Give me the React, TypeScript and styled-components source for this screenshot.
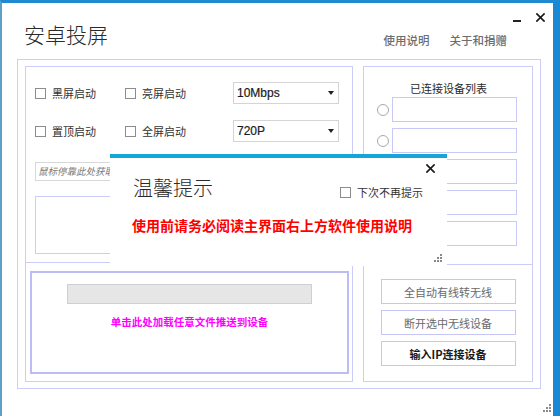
import React from 'react';
import styled, { createGlobalStyle } from 'styled-components';

const GlobalStyle = createGlobalStyle`
  html, body {
    margin: 0;
    padding: 0;
    background: #ffffff;
  }
  body {
    font-family: "Noto Sans CJK SC", "Liberation Sans", sans-serif;
    color: #333;
  }
  * {
    box-sizing: border-box;
  }
`;

const lavender = '#cdcdfc';

const Window = styled.div`
  position: relative;
  width: 560px;
  height: 416px;
  background: #fff;
  border-top: 3px solid #1f8ad2;
  border-left: 2px solid #5d9fc8;
  border-right: 7px solid #1a88d2;
  overflow: hidden;
`;

const Header = styled.div`
  display: flex;
  justify-content: space-between;
  height: 56px;
`;

const AppTitle = styled.h1`
  margin: 0;
  padding: 19px 0 0 22px;
  font-size: 21px;
  line-height: 24px;
  font-weight: 300;
  color: #2a2a2a;
`;

const HeaderRight = styled.div`
  display: flex;
  flex-direction: column;
  align-items: flex-end;
  padding: 9px 8px 0 0;
`;

const WinButtons = styled.div`
  display: flex;
  align-items: flex-end;
  gap: 15px;
  height: 10px;
`;

const MinBar = styled.span`
  display: block;
  width: 8px;
  height: 2px;
  background: #222;
`;

const Links = styled.div`
  display: flex;
  gap: 20px;
  margin-top: 10px;
  padding-right: 38px;
`;

const LinkText = styled.span`
  font-size: 11.5px;
  line-height: 16px;
  color: #6e6e6e;
  font-weight: 500;
`;

const MainFrame = styled.div`
  display: flex;
  gap: 10px;
  width: 524px;
  height: 330px;
  margin-left: 15px;
  padding: 6px 7px;
  border: 1px solid ${lavender};
`;

const LeftPanel = styled.div`
  display: flex;
  flex-direction: column;
  width: 328px;
  border: 1px solid ${lavender};
`;

const OptionsSection = styled.div`
  height: 195px;
  padding: 15px 0 0 9px;
`;

const OptionsGrid = styled.div`
  display: grid;
  grid-template-columns: 90px 108px 106px;
  grid-auto-rows: 22px;
  row-gap: 16px;
  align-items: center;
`;

const CheckLabel = styled.label`
  display: flex;
  align-items: center;
  gap: 6px;
  font-size: 11px;
  line-height: 16px;
  color: #333;
  white-space: nowrap;
`;

const Box = styled.span`
  display: block;
  width: 11px;
  height: 11px;
  border: 1px solid #8c8c8c;
  background: #fff;
  flex-shrink: 0;
`;

const Select = styled.div`
  display: flex;
  align-items: center;
  justify-content: space-between;
  height: 22px;
  padding: 0 4px 0 3px;
  border: 1px solid #d4d4d4;
  background: #fff;
  font-family: "Liberation Sans", Arial, sans-serif;
  font-size: 12px;
  color: #1a1a1a;
  -webkit-text-stroke: 0.2px #1a1a1a;
`;

const Caret = styled.span`
  width: 0;
  height: 0;
  border-left: 3px solid transparent;
  border-right: 3px solid transparent;
  border-top: 4px solid #222;
`;

const HintInput = styled.div`
  width: 305px;
  height: 19px;
  margin-top: 20px;
  padding-left: 2px;
  border: 1px solid #d8d8d8;
  font-size: 9.5px;
  line-height: 17px;
  font-style: italic;
  color: #7a7a7a;
  white-space: nowrap;
  overflow: hidden;
`;

const LogBox = styled.div`
  width: 305px;
  height: 58px;
  margin-top: 15px;
  border: 1px solid ${lavender};
`;

const FileSection = styled.div`
  flex: 1;
  border-top: 1px solid ${lavender};
  padding: 8px 3px 7px 4px;
`;

const FileDrop = styled.div`
  display: flex;
  flex-direction: column;
  align-items: center;
  height: 100%;
  padding-top: 11px;
  border: 2px solid #bdbdf6;
`;

const Progress = styled.div`
  width: 245px;
  height: 20px;
  background: #e6e6e6;
  border: 1px solid #cfcfcf;
`;

const DropText = styled.div`
  margin-top: 11px;
  font-size: 10.5px;
  line-height: 14px;
  font-weight: 700;
  color: #ff00ff;
`;

const RightPanel = styled.div`
  display: flex;
  flex-direction: column;
  width: 170px;
  border: 1px solid ${lavender};
`;

const DeviceSection = styled.div`
  height: 197px;
  padding: 13px 0 0 13px;
`;

const ListTitle = styled.div`
  padding-left: 4px;
  text-align: center;
  width: 139px;
  font-size: 11px;
  line-height: 16px;
  color: #2a2a2a;
  margin-bottom: 1px;
`;

const DeviceList = styled.div`
  display: flex;
  flex-direction: column;
  gap: 6px;
`;

const DeviceRow = styled.div`
  display: flex;
  align-items: center;
  gap: 3px;
`;

const Radio = styled.span`
  width: 12px;
  height: 12px;
  border-radius: 50%;
  border: 1px solid #a8a8a8;
  background: #fff;
`;

const DeviceBox = styled.div`
  width: 125px;
  height: 25px;
  border: 1px solid #c9c9f8;
`;

const ActionSection = styled.div`
  flex: 1;
  display: flex;
  flex-direction: column;
  align-items: center;
  gap: 6px;
  padding-top: 14px;
  border-top: 1px solid ${lavender};
`;

const ActionButton = styled.div<{ $active?: boolean }>`
  display: flex;
  align-items: center;
  justify-content: center;
  width: 135px;
  height: 25px;
  border: 1px solid #c6c6f6;
  background: #fff;
  font-size: 11px;
  color: ${(p) => (p.$active ? '#1a1a1a' : '#6a6a6a')};
  font-weight: ${(p) => (p.$active ? 700 : 400)};
`;

const Dialog = styled.div`
  position: absolute;
  left: 108px;
  top: 151px;
  width: 337px;
  height: 112px;
  background: #fff;
  border-top: 4px solid #14a6d9;
`;

const CloseRow = styled.div`
  display: flex;
  justify-content: flex-end;
  align-items: center;
  height: 18px;
  padding: 2px 12px 0 0;
`;

const DialogTitleRow = styled.div`
  display: flex;
  justify-content: space-between;
  align-items: flex-end;
  padding: 0 24px 0 23px;
`;

const DialogTitle = styled.div`
  font-size: 20px;
  line-height: 24px;
  font-weight: 300;
  color: #2a2a2a;
`;

const Warning = styled.div`
  margin-top: 15px;
  padding-left: 22px;
  font-size: 14px;
  line-height: 20px;
  font-weight: 700;
  color: #ff0000;
`;

const Grip = styled.div<{ $right: number; $bottom: number }>`
  position: absolute;
  right: ${(p) => p.$right}px;
  bottom: ${(p) => p.$bottom}px;
  width: 9px;
  height: 9px;
  line-height: 0;
`;

const CrossIcon = ({ size = 9, stroke = 1.8 }: { size?: number; stroke?: number }) => (
  <svg width={size} height={size} viewBox="0 0 10 10">
    <path d="M1 1 L9 9 M9 1 L1 9" stroke="#1a1a1a" strokeWidth={stroke} strokeLinecap="square" />
  </svg>
);

const GripDots = () => (
  <svg width="9" height="9" viewBox="0 0 9 9">
    {[
      [6, 0],
      [3, 3],
      [6, 3],
      [0, 6],
      [3, 6],
      [6, 6],
    ].map(([x, y]) => (
      <rect key={`${x}-${y}`} x={x} y={y} width="2" height="2" fill="#8a8a8a" />
    ))}
  </svg>
);

const options = [
  { label: '黑屏启动', label2: '亮屏启动', value: '10Mbps' },
  { label: '置顶启动', label2: '全屏启动', value: '720P' },
];

const actions = [
  { text: '全自动有线转无线', active: false },
  { text: '断开选中无线设备', active: false },
  { text: '输入IP连接设备', active: true },
];

const App: React.FC = () => {
  return (
    <>
      <GlobalStyle />
      <Window>
        <Header>
          <AppTitle>安卓投屏</AppTitle>
          <HeaderRight>
            <WinButtons>
              <MinBar />
              <CrossIcon />
            </WinButtons>
            <Links>
              <LinkText>使用说明</LinkText>
              <LinkText>关于和捐赠</LinkText>
            </Links>
          </HeaderRight>
        </Header>

        <MainFrame>
          <LeftPanel>
            <OptionsSection>
              <OptionsGrid>
                {options.map((o) => (
                  <React.Fragment key={o.label}>
                    <CheckLabel>
                      <Box />
                      {o.label}
                    </CheckLabel>
                    <CheckLabel>
                      <Box />
                      {o.label2}
                    </CheckLabel>
                    <Select>
                      <span>{o.value}</span>
                      <Caret />
                    </Select>
                  </React.Fragment>
                ))}
              </OptionsGrid>
              <HintInput>鼠标停靠此处获取设备IP地址</HintInput>
              <LogBox />
            </OptionsSection>
            <FileSection>
              <FileDrop>
                <Progress />
                <DropText>单击此处加载任意文件推送到设备</DropText>
              </FileDrop>
            </FileSection>
          </LeftPanel>

          <RightPanel>
            <DeviceSection>
              <ListTitle>已连接设备列表</ListTitle>
              <DeviceList>
                {[0, 1, 2, 3, 4].map((i) => (
                  <DeviceRow key={i}>
                    <Radio />
                    <DeviceBox />
                  </DeviceRow>
                ))}
              </DeviceList>
            </DeviceSection>
            <ActionSection>
              {actions.map((a) => (
                <ActionButton key={a.text} $active={a.active}>
                  {a.text}
                </ActionButton>
              ))}
            </ActionSection>
          </RightPanel>
        </MainFrame>

        <Dialog>
          <CloseRow>
            <CrossIcon />
          </CloseRow>
          <DialogTitleRow>
            <DialogTitle>温馨提示</DialogTitle>
            <CheckLabel>
              <Box />
              下次不再提示
            </CheckLabel>
          </DialogTitleRow>
          <Warning>使用前请务必阅读主界面右上方软件使用说明</Warning>
          <Grip $right={4} $bottom={3}>
            <GripDots />
          </Grip>
        </Dialog>

        <Grip $right={1} $bottom={3}>
          <GripDots />
        </Grip>
      </Window>
    </>
  );
};

export default App;
